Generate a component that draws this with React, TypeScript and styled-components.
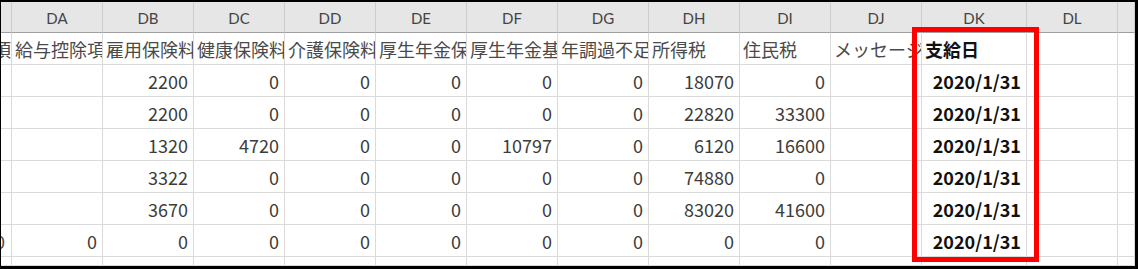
import React from "react";
import styled, { createGlobalStyle, css } from "styled-components";

const Global = createGlobalStyle`
  html, body { margin: 0; padding: 0; background: #ffffff; }
  body { font-family: "Noto Sans CJK JP", "Noto Sans", sans-serif; }
`;

const COLS = "11px repeat(10, 91px) 105px 91px 1fr";

const Sheet = styled.div`
  position: relative;
  box-sizing: border-box;
  width: 1138px;
  height: 269px;
  border-style: solid;
  border-color: #000;
  border-width: 2px 3px 3px 1px;
  display: grid;
  grid-template-columns: ${COLS};
  grid-template-rows: 31px repeat(7, 32px) 1fr;
  overflow: hidden;
  background: #fff;
`;

const HeaderCell = styled.div`
  box-sizing: border-box;
  background: #e6e6e6;
  border-right: 1px solid #cdcdcd;
  border-bottom: 1px solid #9f9f9f;
  display: flex;
  align-items: center;
  justify-content: center;
  font-family: Lato, "Liberation Sans", sans-serif;
  font-size: 15px;
  color: #444;
  padding-top: 1px;
`;

const Cell = styled.div<{ $align?: "left" | "right"; $bold?: boolean }>`
  box-sizing: border-box;
  min-width: 0;
  border-right: 1px solid #dadada;
  border-bottom: 1px solid #dadada;
  overflow: hidden;
  white-space: nowrap;
  display: flex;
  align-items: center;
  font-family: "Noto Sans CJK JP", sans-serif;
  font-size: 18px;
  color: #3c3c3c;
  ${(p) =>
    p.$align === "right"
      ? css`
          justify-content: flex-end;
          padding-right: 5px;
        `
      : css`
          justify-content: flex-start;
          padding-left: 3px;
        `}
  ${(p) =>
    p.$bold &&
    css`
      font-weight: 700;
      color: #111;
    `}
`;

const Label = styled.span<{ $fromEnd?: boolean }>`
  display: block;
  min-width: 0;
  max-width: 100%;
  overflow: hidden;
  white-space: nowrap;
  text-overflow: clip;
  color: #4a4a4a;
  ${(p) =>
    p.$fromEnd &&
    css`
      direction: rtl;
    `}
`;

const Highlight = styled.div`
  position: absolute;
  left: 911px;
  top: 25px;
  width: 127px;
  height: 235px;
  box-sizing: border-box;
  border: 5px solid #ff0000;
  pointer-events: none;
`;

const columnNames = ["", "DA", "DB", "DC", "DD", "DE", "DF", "DG", "DH", "DI", "DJ", "DK", "DL", ""];

const labels = [
  "項",
  "給与控除項目",
  "雇用保険料",
  "健康保険料",
  "介護保険料",
  "厚生年金保険料",
  "厚生年金基金",
  "年調過不足税額",
  "所得税",
  "住民税",
  "メッセージ",
];

const DATE = "2020/1/31";

const rows: string[][] = [
  ["", "", "2200", "0", "0", "0", "0", "0", "18070", "0", ""],
  ["", "", "2200", "0", "0", "0", "0", "0", "22820", "33300", ""],
  ["", "", "1320", "4720", "0", "0", "10797", "0", "6120", "16600", ""],
  ["", "", "3322", "0", "0", "0", "0", "0", "74880", "0", ""],
  ["", "", "3670", "0", "0", "0", "0", "0", "83020", "41600", ""],
  ["0", "0", "0", "0", "0", "0", "0", "0", "0", "0", ""],
];

export default function App() {
  return (
    <>
      <Global />
      <Sheet>
        {columnNames.map((c, i) => (
          <HeaderCell key={"h" + i}>{c}</HeaderCell>
        ))}

        {labels.map((l, i) => (
          <Cell
            key={"l" + i}
            $align={i === 0 ? "right" : "left"}
            style={i === 0 ? { paddingRight: 0 } : undefined}
          >
            <Label $fromEnd={i === 0}>{l}</Label>
          </Cell>
        ))}
        <Cell $bold>支給日</Cell>
        <Cell />
        <Cell />

        {rows.map((r, ri) => (
          <React.Fragment key={"r" + ri}>
            {r.map((v, ci) => (
              <Cell key={ci} $align="right" style={ci === 0 ? { paddingRight: 6 } : undefined}>
                {ci === 0 && v ? <Label $fromEnd>{v}</Label> : v}
              </Cell>
            ))}
            <Cell $align="right" $bold>
              {DATE}
            </Cell>
            <Cell />
            <Cell />
          </React.Fragment>
        ))}

        {Array.from({ length: 14 }).map((_, i) => (
          <Cell key={"e" + i} />
        ))}
        <Highlight />
      </Sheet>
    </>
  );
}
